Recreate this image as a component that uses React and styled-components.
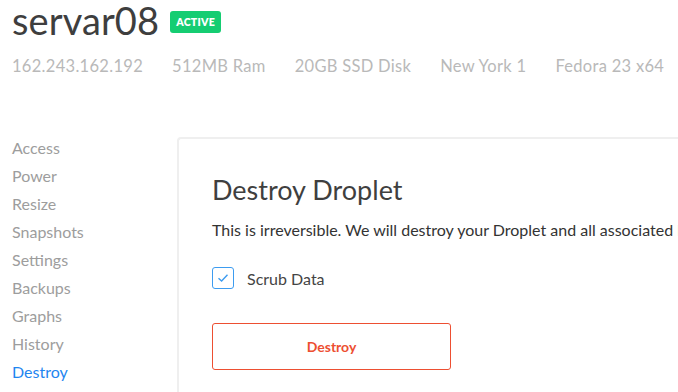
import React from "react";
import styled, { createGlobalStyle } from "styled-components";

const GlobalStyle = createGlobalStyle`
	body {
		margin: 0;
		background: #fff;
		font-family: "Lato", "Liberation Sans", sans-serif;
		overflow: hidden;
	}
`;

const menu = ["Access", "Power", "Resize", "Snapshots", "Settings", "Backups", "Graphs", "History", "Destroy"];
const specs = ["162.243.162.192", "512MB Ram", "20GB SSD Disk", "New York 1", "Fedora 23 x64"];

function App() {
	return (
		<Page>
			<GlobalStyle />
			<Header>
				<TitleRow>
					<Title>servar08</Title>
					<Badge>ACTIVE</Badge>
				</TitleRow>
				<Specs>
					{specs.map((s) => (
						<span key={s}>{s}</span>
					))}
				</Specs>
			</Header>

			<Body>
				<Sidebar>
					{menu.map((m) => (
						<MenuItem key={m} active={m === "Destroy"}>
							{m}
						</MenuItem>
					))}
				</Sidebar>

				<Panel>
					<PanelTitle>Destroy Droplet</PanelTitle>
					<Text>This is irreversible. We will destroy your Droplet and all associated backups.</Text>
					<CheckRow>
						<Check>
							<svg width="12" height="10" viewBox="0 0 12 10">
								<path d="M1.5 5.2 L4.6 8 L10.5 1.8" fill="none" stroke="#3d9cf0" strokeWidth="1.4" />
							</svg>
						</Check>
						<span>Scrub Data</span>
					</CheckRow>
					<DestroyButton>Destroy</DestroyButton>
				</Panel>
			</Body>
		</Page>
	);
}

export default App;

const Page = styled.div`
	width: 678px;
	height: 392px;
	overflow: hidden;
`;

const Header = styled.div`
	padding: 0 0 0 12px;
`;

const TitleRow = styled.div`
	display: flex;
	align-items: center;
	gap: 11px;
	height: 44px;
`;

const Title = styled.h1`
	margin: -4px 0 0 0;
	font-weight: 400;
	font-size: 38px;
	line-height: 40px;
	color: #3e3e3e;
	letter-spacing: 0.1px;
`;

const Badge = styled.span`
	background: #15cd72;
	color: #fff;
	font-weight: 800;
	font-size: 10.5px;
	line-height: 12px;
	border-radius: 3px;
	padding: 5px 6px;
	letter-spacing: 0.3px;
`;

const Specs = styled.div`
	display: flex;
	gap: 29px;
	margin-top: 12px;
	font-size: 16.5px;
	letter-spacing: 0.3px;
	color: #b9b9b9;
	white-space: nowrap;
`;

const Body = styled.div`
	display: flex;
	align-items: flex-start;
	margin-top: 61px;
`;

const Sidebar = styled.div`
	width: 177px;
	margin-top: -3px;
	padding-left: 12px;
	box-sizing: border-box;
	display: flex;
	flex-direction: column;
`;

const MenuItem = styled.div`
	height: 28px;
	line-height: 28px;
	font-size: 16px;
	color: ${(props) => (props.active ? "#1f86f0" : "#9d9d9d")};
`;

const Panel = styled.div`
	flex: 1;
	border-top: 2px solid #efefef;
	border-left: 2px solid #efefef;
	border-top-left-radius: 4px;
	padding: 35px 0 0 33px;
	white-space: nowrap;
	overflow: hidden;
	height: 260px;
`;

const PanelTitle = styled.h2`
	margin: 0;
	font-weight: 400;
	font-size: 27px;
	line-height: 32px;
	color: #3f3f3f;
`;

const Text = styled.p`
	margin: 14px 0 0 0;
	font-size: 16px;
	line-height: 19px;
	color: #333;
`;

const CheckRow = styled.div`
	display: flex;
	align-items: center;
	gap: 13px;
	margin-top: 28px;
	font-size: 16px;
	color: #444;
`;

const Check = styled.div`
	width: 20px;
	height: 20px;
	border: 1px solid #3d9cf0;
	border-radius: 3px;
	display: flex;
	align-items: center;
	justify-content: center;
`;

const DestroyButton = styled.button`
	display: block;
	margin-top: 34px;
	width: 239px;
	height: 47px;
	background: #fff;
	border: 1.5px solid #ed4f32;
	border-radius: 3px;
	color: #ed4f32;
	font-family: inherit;
	font-weight: 700;
	font-size: 14px;
`;
